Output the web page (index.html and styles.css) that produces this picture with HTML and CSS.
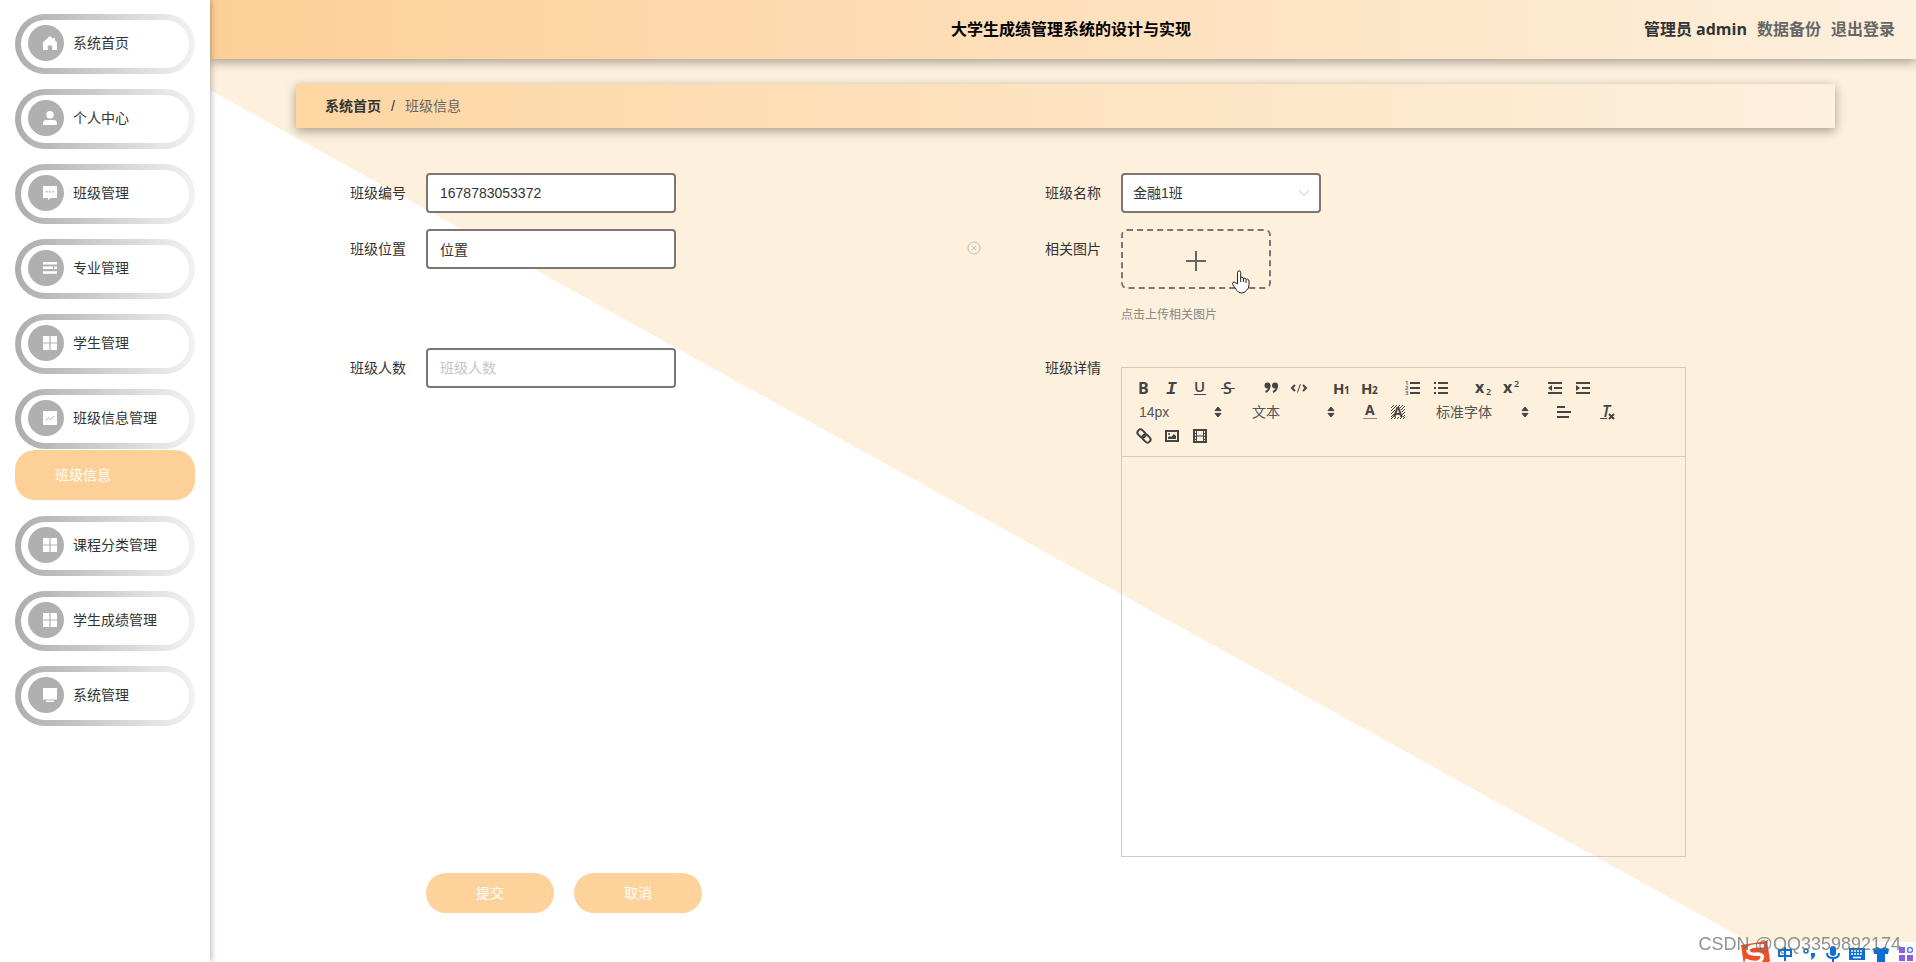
FILE: index.html
```html
<!DOCTYPE html>
<html lang="zh-CN">
<head>
<meta charset="utf-8">
<title>大学生成绩管理系统的设计与实现</title>
<link rel="stylesheet" href="styles.css">
</head>
<body>
<svg class="defs" aria-hidden="true">
  <symbol id="grid" viewBox="0 0 14 14"><path d="M0 0h6.4v6.4H0zM7.6 0H14v6.4H7.6zM0 7.6h6.4V14H0zM7.6 7.6H14V14H7.6z"/></symbol>
  <symbol id="carets" viewBox="0 0 8 12"><path d="M4 1 7 4.600H1zM4 11 1 7.400h6z" stroke="#444" stroke-linejoin="round"/></symbol>
</svg>
<div class="app">
  <nav class="sidebar">
    <ul class="menu">
      <li><a class="menu-item" href="#"><span class="badge"><svg viewBox="0 0 14 14"><path d="M7 0 0 6.300V14h4.800V9.500h4.400V14H14V6.300L12 4.500V2h-1.500v1.200z"/></svg></span>系统首页</a></li>
      <li><a class="menu-item" href="#"><span class="badge"><svg viewBox="0 0 14 14"><circle cx="7" cy="3.700" r="3.700"/><path d="M0 14v-1.500Q0 9 3.500 9h7Q14 9 14 12.500V14z"/></svg></span>个人中心</a></li>
      <li><a class="menu-item" href="#"><span class="badge"><svg viewBox="0 0 14 14"><path fill-rule="evenodd" d="M0 0h14v12H8l-3 2v-2H0zM3 5v1.500h1.500V5zm3.200 0v1.500h1.500V5zm3.200 0v1.500h1.500V5z"/></svg></span>班级管理</a></li>
      <li><a class="menu-item" href="#"><span class="badge"><svg viewBox="0 0 14 14"><path d="M0 1h14v2.500H0zM0 5.600h10v2.500H0zM11.200 5.600H14v2.500h-2.800zM0 10.300h14v2.500H0z"/></svg></span>专业管理</a></li>
      <li><a class="menu-item" href="#"><span class="badge"><svg><use href="#grid"/></svg></span>学生管理</a></li>
      <li>
        <a class="menu-item" href="#"><span class="badge"><svg viewBox="0 0 14 14"><path d="M0 0h14v14H0z"/><path d="M2.500 9.500 5.500 7l2 1.500L11.500 5" fill="none" stroke="#b0b0b0"/></svg></span>班级信息管理</a>
        <a class="submenu-item" href="#" aria-current="page">班级信息</a>
      </li>
      <li><a class="menu-item" href="#"><span class="badge"><svg><use href="#grid"/></svg></span>课程分类管理</a></li>
      <li><a class="menu-item" href="#"><span class="badge"><svg><use href="#grid"/></svg></span>学生成绩管理</a></li>
      <li><a class="menu-item" href="#"><span class="badge"><svg viewBox="0 0 14 14"><path d="M0 0h14v11.500H0zM3 12.500h8V14H3z"/></svg></span>系统管理</a></li>
    </ul>
  </nav>
  <main class="main">
    <header class="topbar">
      <h1 class="title">大学生成绩管理系统的设计与实现</h1>
      <div class="user"><span>管理员 <b>admin</b></span><a href="#">数据备份</a><a href="#">退出登录</a></div>
    </header>
    <div class="content">
      <nav class="breadcrumb" aria-label="位置"><a href="#">系统首页</a><span class="slash">/</span><span class="current">班级信息</span></nav>
      <form class="form">
        <div class="field">
          <label for="code">班级编号</label>
          <div class="control"><input class="box" id="code" type="text" value="1678783053372"></div>
        </div>
        <div class="field">
          <label for="name">班级名称</label>
          <div class="control">
            <div class="select-wrap">
              <select class="box" id="name"><option>金融1班</option></select>
              <svg class="arrow" viewBox="0 0 14 14"><path d="m2 4.500 5 5 5-5" fill="none" stroke="#c0c4cc"/></svg>
            </div>
          </div>
        </div>
        <div class="field">
          <label for="place">班级位置</label>
          <div class="control clearable">
            <input class="box" id="place" type="text" value="位置">
            <button class="clear" type="button" aria-label="清空"><svg viewBox="0 0 14 14"><circle cx="7" cy="7" r="6"/><path d="m5 5 4 4m0-4L5 9"/></svg></button>
          </div>
        </div>
        <div class="field">
          <span class="label">相关图片</span>
          <div class="control">
            <button class="upload" type="button" aria-label="上传相关图片">
              <svg class="plus" viewBox="0 0 20 20"><path d="M10 0v20M0 10h20"/></svg>
              <svg class="pointer" viewBox="0 0 18 24"><path d="M5.500 14V2.500a1.600 1.600 0 0 1 3.200 0V8q.2-1 1.400-.8T11.400 9q.2-1.200 1.400-.9t1.300 1.600q.4-1 1.500-.6t1.400 1.800v4q0 3.500-2.500 5.500-2 2.600-5 2.600t-4.500-2.500L1 15q-1-2 0-2.600t2.600.4z" fill="#fff" stroke="#222"/><path d="M8.700 8v4M11.400 9v3M14.100 10v3" stroke="#222" fill="none"/></svg>
            </button>
            <p class="tip">点击上传相关图片</p>
          </div>
        </div>
        <div class="field">
          <label for="count">班级人数</label>
          <div class="control"><input class="box" id="count" type="text" placeholder="班级人数"></div>
        </div>
        <div class="field">
          <label for="detail">班级详情</label>
          <div class="control editor">
            <div class="toolbar">
              <div class="group">
                <button type="button" aria-label="加粗"><svg viewBox="0 0 18 18"><text class="heavy" x="3" y="15" font-size="16">B</text></svg></button>
                <button type="button" aria-label="斜体"><svg viewBox="0 0 18 18"><text class="mono" x="3" y="15" font-size="18">I</text></svg></button>
                <button type="button" aria-label="下划线"><svg viewBox="0 0 18 18"><text x="3" y="13" font-size="15">U</text><path d="M3 15.500h12"/></svg></button>
                <button type="button" aria-label="删除线"><svg viewBox="0 0 18 18"><text x="4" y="15" font-size="16">S</text><path d="M2 9.500h14"/></svg></button>
              </div>
              <div class="group">
                <button type="button" aria-label="引用"><svg viewBox="0 0 18 18"><circle class="solid" cx="5.500" cy="6.500" r="3"/><circle class="solid" cx="13" cy="6.500" r="3"/><path class="thick" d="M7.500 6.500q0 5-4 6.500M15 6.500q0 5-4 6.500"/></svg></button>
                <button type="button" aria-label="代码"><svg viewBox="0 0 18 18"><path class="thick" d="M5 6 2 9l3 3M13 6l3 3-3 3"/><path d="m10.500 5-3 8.500"/></svg></button>
              </div>
              <div class="group">
                <button type="button" aria-label="标题1"><svg viewBox="0 0 18 18"><text class="heavy" x="0" y="15" font-size="15">H</text><text class="heavy" x="11" y="15" font-size="10">1</text></svg></button>
                <button type="button" aria-label="标题2"><svg viewBox="0 0 18 18"><text class="heavy" x="0" y="15" font-size="15">H</text><text class="heavy" x="11" y="15" font-size="10">2</text></svg></button>
              </div>
              <div class="group">
                <button type="button" aria-label="有序列表"><svg viewBox="0 0 18 18"><path class="thick" d="M6 4h10M6 9h10M6 14h10"/><text x="1" y="6" font-size="6">1</text><text x="1" y="11" font-size="6">2</text><text x="1" y="16" font-size="6">3</text></svg></button>
                <button type="button" aria-label="无序列表"><svg viewBox="0 0 18 18"><path class="thick" d="M6 4h10M6 9h10M6 14h10M2 4h2M2 9h2M2 14h2"/></svg></button>
              </div>
              <div class="group">
                <button type="button" aria-label="下标"><svg viewBox="0 0 18 18"><text class="heavy" x="0" y="14" font-size="16">x</text><text x="11" y="16" font-size="9">2</text></svg></button>
                <button type="button" aria-label="上标"><svg viewBox="0 0 18 18"><text class="heavy" x="0" y="14" font-size="16">x</text><text x="11" y="8" font-size="9">2</text></svg></button>
              </div>
              <div class="group">
                <button type="button" aria-label="减少缩进"><svg viewBox="0 0 18 18"><path class="thick" d="M2 4h14M8 9h8M2 14h14"/><path class="solid" d="M6 6v6L2 9z"/></svg></button>
                <button type="button" aria-label="增加缩进"><svg viewBox="0 0 18 18"><path class="thick" d="M2 4h14M8 9h8M2 14h14"/><path class="solid" d="M2 6v6l4-3z"/></svg></button>
              </div>
              <div class="group picker"><select aria-label="字号"><option>14px</option></select><svg class="carets"><use href="#carets"/></svg></div>
              <div class="group picker"><select aria-label="标题"><option>文本</option></select><svg class="carets"><use href="#carets"/></svg></div>
              <div class="group">
                <button type="button" aria-label="文字颜色"><svg viewBox="0 0 18 18"><text class="heavy" x="4" y="12" font-size="14">A</text><path d="M2 15.500h14" opacity=".6"/></svg></button>
                <button type="button" aria-label="背景颜色"><svg viewBox="0 0 18 18"><path d="M2 5l3-3M2 8l6-6M2 11l4-4M2 14l3-3M2 16l3-3M8 5l3-3M11 5l3-3M12 7l4-4M13 9l3-3M13 12l3-3M14 14l2-2M5 16l2-2M8 16l2-2M11 16l2-2M14 16l2-2"/><text class="heavy" x="4" y="14" font-size="14">A</text></svg></button>
              </div>
              <div class="group picker wide"><select aria-label="字体"><option>标准字体</option></select><svg class="carets"><use href="#carets"/></svg></div>
              <div class="group">
                <button type="button" aria-label="对齐"><svg viewBox="0 0 18 18"><path class="thick" d="M2 4h8M2 9h14M2 14h12"/></svg></button>
              </div>
              <div class="group">
                <button type="button" aria-label="清除格式"><svg viewBox="0 0 18 18"><text class="slant" x="4" y="14" font-size="16">T</text><path d="M2 15.500h7"/><path class="thick" d="m11 11 5 5m0-5-5 5"/></svg></button>
              </div>
              <div class="group">
                <button type="button" aria-label="链接"><svg viewBox="0 0 18 18"><g class="thick" transform="rotate(45 9 9)"><rect x="1" y="6" width="9" height="6" rx="3"/><rect x="8" y="6" width="9" height="6" rx="3"/></g></svg></button>
                <button type="button" aria-label="图片"><svg viewBox="0 0 18 18"><rect class="thick" x="3" y="4" width="12" height="10"/><circle class="solid" cx="6" cy="7" r="1"/><path class="solid" d="M5 12v-2l2-1 1 1 3-3 2 2v3z"/></svg></button>
                <button type="button" aria-label="视频"><svg viewBox="0 0 18 18"><path class="thick" d="M3 3h12v12H3z"/><path d="M5.500 3v12M12.500 3v12M6 9h6M3 6.500h3M3 9.500h3M3 12.500h3M12 6.500h3M12 9.500h3M12 12.500h3"/></svg></button>
              </div>
            </div>
            <textarea class="editor-body" id="detail"></textarea>
          </div>
        </div>
        <div class="actions">
          <button class="btn" type="submit">提交</button>
          <button class="btn" type="button">取消</button>
        </div>
      </form>
    </div>
  </main>
</div>
<div class="ime">
  <svg class="ime-logo" viewBox="0 0 30 24"><path d="M1 4 27 0l3 20-5 4H4z" fill="#f04e23"/><path d="M24 5Q8 4 8 9t10 4q7 1 3 6T5 19" fill="none" stroke="#fff" stroke-width="3.500"/></svg>
  <svg viewBox="0 0 16 16"><path d="M2 4h12v6H2zM8 1v14" fill="none" stroke="#0b6fd6" stroke-width="2"/></svg>
  <svg viewBox="0 0 16 16"><circle cx="5" cy="5" r="2" fill="none" stroke="#0b6fd6" stroke-width="1.500"/><path d="M10 7h4q1 4-4 7 1-2 0-4z" fill="#0b6fd6"/></svg>
  <svg viewBox="0 0 16 16"><rect x="5" y="0" width="6" height="10" rx="3" fill="#0b6fd6"/><path d="M2 7q0 5 6 5t6-5M8 12v4" fill="none" stroke="#0b6fd6" stroke-width="2"/></svg>
  <svg viewBox="0 0 16 16"><path d="M0 2h16v12H0z" fill="#0b6fd6"/><path d="M2 5h12M2 8h12" stroke="#fff" stroke-width="1.500" stroke-dasharray="2 1"/><path d="M4 11.500h8" stroke="#fff" stroke-width="1.500"/></svg>
  <svg viewBox="0 0 16 16"><path d="M0 3 5 1q3 3 6 0l5 2-1 5h-3v8H4V8H1z" fill="#0b6fd6"/></svg>
  <svg viewBox="0 0 16 16"><path d="M2 1h6v6H2zM2 9h6v6H2zM10 9h6v6h-6z" fill="#8a5fe0"/><circle cx="13" cy="4" r="2.500" fill="none" stroke="#5b7ce8" stroke-width="1.500"/></svg>
</div>
<div class="watermark">CSDN @QQ3359892174</div>
</body>
</html>
```

FILE: styles.css
```css
* { box-sizing: border-box; }

body {
  margin: 0;
  background: #fff;
  color: #333;
  font-family: "Liberation Sans", "Noto Sans CJK SC", sans-serif;
  font-size: 14px;
  line-height: 20px;
}

a { color: inherit; text-decoration: none; }
button, input, select, textarea { font: inherit; color: inherit; }
button { padding: 0; border: 0; background: none; cursor: pointer; }
.defs { display: none; }

.app { display: flex; min-height: 100vh; }

/* sidebar */
.sidebar {
  flex: 0 0 210px;
  padding: 14px 15px;
  background: #fff;
  box-shadow: 1px 0 6px rgba(0, 0, 0, .3);
  z-index: 2;
}
.menu {
  display: flex;
  flex-direction: column;
  gap: 15px;
  margin: 0;
  padding: 0;
  list-style: none;
}
.menu-item {
  display: flex;
  align-items: center;
  gap: 9px;
  height: 60px;
  padding: 0 7px 2px;
  border: 6px solid transparent;
  border-radius: 30px;
  background:
    linear-gradient(#fff, #fff) padding-box,
    linear-gradient(90deg, #adadad, #f2f2f2) border-box;
}
.badge {
  display: flex;
  align-items: center;
  justify-content: flex-end;
  width: 36px;
  height: 36px;
  padding-right: 7px;
  border-radius: 50%;
  background: #b0b0b0;
}
.badge svg { width: 14px; height: 14px; fill: #fff; }
.submenu-item {
  display: flex;
  align-items: center;
  height: 50px;
  margin: 1px 0;
  padding-left: 40px;
  border-radius: 20px;
  background: #fdd097;
  color: #fff;
}

/* main area */
.main {
  flex: 1;
  min-width: 0;
  background:
    linear-gradient(#fdf0dc, #fdf0dc) 0 0 / 100% 90px no-repeat,
    linear-gradient(to top right, #fff 50%, #fdf0dc 50%) 0 90px / 100% 944px no-repeat;
}
.topbar {
  display: grid;
  grid-template-columns: 1fr auto 1fr;
  align-items: center;
  height: 59px;
  padding: 0 21px 2px 37px;
  background: linear-gradient(90deg, #fdcf97, #fdf0de);
  box-shadow: 0 3px 10px rgba(0, 0, 0, .35);
  font-family: "Open Sans", "Noto Sans CJK SC", sans-serif;
  font-size: 16px;
  font-weight: 600;
}
.title {
  grid-column: 2;
  margin: 0;
  color: #000;
  font: inherit;
}
.user { display: flex; justify-content: flex-end; gap: 10px; }
.user b { font-weight: 700; }
.user a { color: #666; }

.content { padding: 25px 81px 40px 86px; }
.breadcrumb {
  display: flex;
  align-items: center;
  gap: 10px;
  height: 44px;
  padding-left: 29px;
  background: linear-gradient(90deg, #fdd6a2, #fdf0de);
  box-shadow: 0 3px 10px rgba(0, 0, 0, .35);
}
.breadcrumb a { font-weight: bold; }
.current { color: #666; }

/* form */
.form {
  display: grid;
  grid-template-columns: 1fr 1fr;
  row-gap: 16px;
  padding: 45px 99px 0 50px;
}
.field { display: flex; align-items: flex-start; }
.field label, .label {
  flex: 0 0 80px;
  padding-right: 20px;
  line-height: 40px;
  text-align: right;
}
.control { flex: 1; min-width: 0; }
.box {
  display: block;
  width: 250px;
  height: 40px;
  padding: 0 12px;
  border: 2px solid #7b7672;
  border-radius: 4px;
  background: #fff;
}
.box::placeholder { color: #c4c4c8; }
.select-wrap { position: relative; width: 200px; }
.select-wrap .box { width: 100%; padding: 0 10px; appearance: none; }
.arrow { position: absolute; top: 13px; right: 10px; width: 14px; height: 14px; pointer-events: none; }
.clearable { display: flex; justify-content: space-between; padding-right: 60px; }
.clear { height: 38px; width: 14px; }
.clear svg { display: block; width: 14px; fill: none; stroke: #c0c0bc; }
.upload {
  position: relative;
  display: flex;
  align-items: center;
  justify-content: center;
  width: 150px;
  height: 60px;
  border: 2px dashed #7b7672;
  border-radius: 6px;
}
.plus { width: 20px; height: 20px; margin-top: 4px; stroke: #666; stroke-width: 2; }
.pointer { position: absolute; right: 19px; bottom: -7px; width: 18px; height: 24px; }
.tip { margin: 16px 0 7px; color: #888; font-size: 12px; }

/* rich text editor */
.editor { margin: 19px 50px 0 0; border: 1px solid #ccc; }
.toolbar {
  display: flex;
  flex-wrap: wrap;
  column-gap: 15px;
  padding: 8px;
  border-bottom: 1px solid #ccc;
}
.group { display: flex; height: 24px; }
.group button {
  display: flex;
  align-items: center;
  justify-content: center;
  width: 28px;
  height: 24px;
}
.group button svg { width: 18px; height: 18px; overflow: visible; fill: none; stroke: #444; }
.group text { fill: #444; stroke: none; font-family: "Open Sans", sans-serif; font-weight: 600; }
.group .heavy { font-weight: 700; }
.group .slant { font-style: italic; }
.group .mono { font-family: "Liberation Mono", monospace; font-style: italic; font-weight: 700; }
.group .solid { fill: #444; stroke: none; }
.group .thick { stroke-width: 2; }
.picker { position: relative; width: 98px; }
.picker.wide { width: 108px; }
.picker select {
  width: 100%;
  padding: 0 9px;
  border: 0;
  background: none;
  color: #555;
  appearance: none;
}
.carets { position: absolute; top: 6px; right: 6px; width: 8px; height: 12px; fill: #444; pointer-events: none; }
.editor-body {
  display: block;
  width: 100%;
  height: 399px;
  padding: 12px 15px;
  border: 0;
  background: none;
  resize: none;
}

.actions { grid-column: 1 / -1; display: flex; gap: 20px; padding-left: 80px; }
.btn {
  width: 128px;
  height: 40px;
  border-radius: 20px;
  background: #fed29b;
  color: #fff;
}

/* input method bar and watermark lie over the page */
.ime {
  position: fixed;
  right: 0;
  bottom: 0;
  z-index: 3;
  display: flex;
  align-items: center;
  gap: 8px;
  width: 176px;
  height: 20px;
  padding-top: 4px;
  background: #fdfdfe;
}
.ime svg { flex: none; width: 16px; height: 16px; }
.ime .ime-logo { width: 30px; height: 24px; margin: -3px -1px 0 0; }
.watermark {
  position: fixed;
  right: 15px;
  bottom: 6px;
  z-index: 4;
  color: rgba(110, 110, 110, .75);
  font-size: 18px;
  line-height: 24px;
}
```
